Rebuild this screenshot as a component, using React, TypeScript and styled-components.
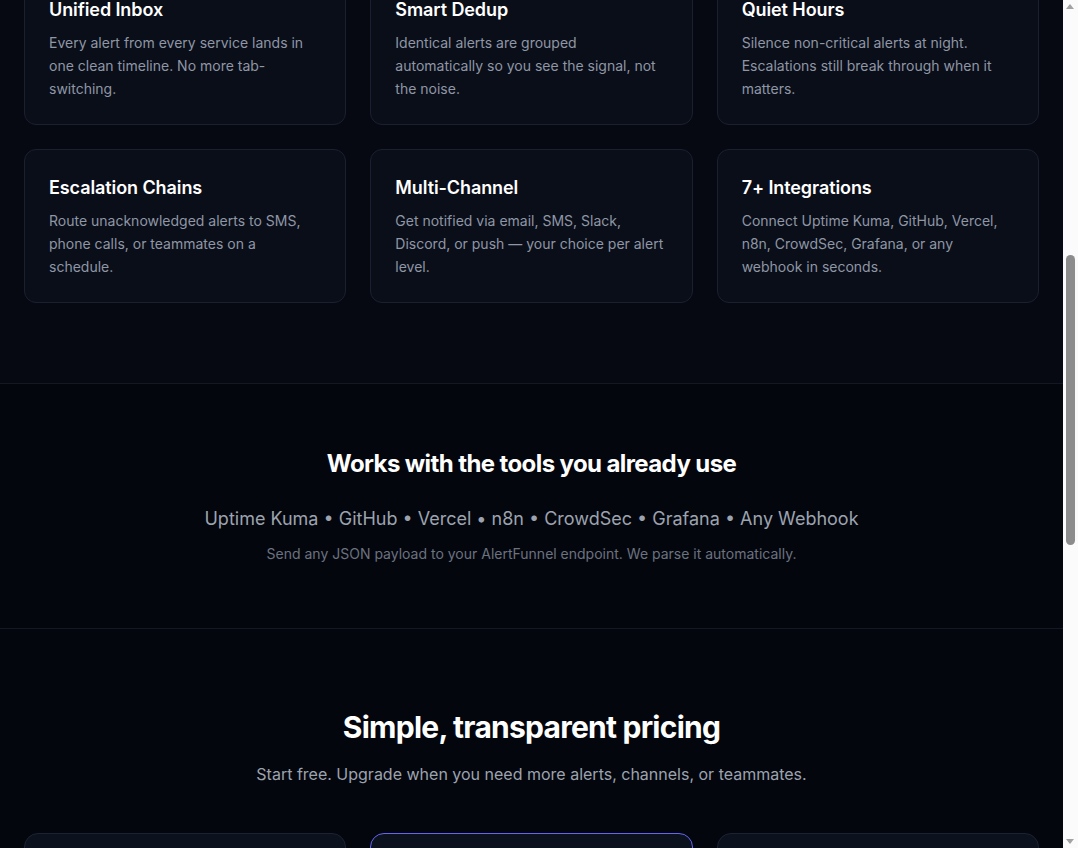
import React, { useLayoutEffect, useRef } from "react";
import styled, { createGlobalStyle } from "styled-components";

const GlobalStyle = createGlobalStyle`
  html { scroll-behavior: auto; }
  body {
    margin: 0;
    background: #04060d;
    color: #f3f4f6;
    font-family: Inter, "Noto Sans", "Liberation Sans", sans-serif;
    -webkit-font-smoothing: antialiased;
  }
  * { box-sizing: border-box; }
`;

const Page = styled.div`
  display: flex;
  flex-direction: column;
  margin-right: 15px;
`;

const ScrollTrack = styled.div`
  position: fixed;
  top: 0;
  right: 0;
  width: 15px;
  height: 100vh;
  background: #fbfbfb;
  z-index: 10;
`;

const ScrollThumb = styled.div`
  position: absolute;
  left: 3px;
  width: 9px;
  border-radius: 5px;
  background: #8c8c8c;
`;

const ScrollArrow = styled.div<{ $down?: boolean }>`
  position: absolute;
  left: 3px;
  width: 0;
  height: 0;
  border-left: 4.5px solid transparent;
  border-right: 4.5px solid transparent;
  ${(p) =>
    p.$down
      ? "bottom: 4px; border-top: 5px solid #a3a3a3;"
      : "top: 4px; border-bottom: 5px solid #a3a3a3;"}
`;

const Nav = styled.header`
  display: flex;
  align-items: center;
  justify-content: space-between;
  height: 64px;
  padding: 0 24px;
  border-bottom: 1px solid #141926;
`;

const Brand = styled.div`
  font-weight: 700;
  font-size: 18px;
  color: #ffffff;
`;

const NavLinks = styled.nav`
  display: flex;
  gap: 24px;
  font-size: 14px;
  color: #9ca3af;
`;

const Hero = styled.section`
  display: flex;
  flex-direction: column;
  align-items: center;
  padding: 96px 24px 80px;
  text-align: center;
  gap: 20px;
`;

const HeroTitle = styled.h1`
  margin: 0;
  font-size: 48px;
  line-height: 1.1;
  font-weight: 800;
  letter-spacing: -0.03em;
`;

const HeroText = styled.p`
  margin: 0;
  font-size: 18px;
  color: #9ca3af;
`;

const Section = styled.section<{ $bg?: string; $pad: string; $border?: boolean }>`
  background: ${(p) => p.$bg || "#04060d"};
  padding: ${(p) => p.$pad};
  border-top: ${(p) => (p.$border ? "1px solid #131825" : "none")};
`;

const Container = styled.div`
  max-width: 1100px;
  margin: 0 auto;
  display: flex;
  flex-direction: column;
`;

const SectionHead = styled.div`
  display: flex;
  flex-direction: column;
  align-items: center;
  text-align: center;
  margin-bottom: 48px;
`;

const Grid = styled.div`
  display: grid;
  grid-template-columns: repeat(3, 1fr);
  gap: 24px;
`;

const Card = styled.div`
  background: #0a0e19;
  border: 1px solid #1b2030;
  border-radius: 12px;
  padding: 24px;
`;

const CardTitle = styled.h3`
  margin: 0 0 8px;
  font-size: 18px;
  line-height: 27px;
  font-weight: 600;
  color: #ffffff;
  letter-spacing: -0.005em;
`;

const CardText = styled.p`
  margin: 0;
  font-size: 14px;
  line-height: 23px;
  color: #8f96a5;
`;

const H2 = styled.h2<{ $size: number; $line: string }>`
  margin: 0;
  font-size: ${(p) => p.$size}px;
  line-height: ${(p) => p.$line};
  font-weight: 700;
  color: #ffffff;
  letter-spacing: -0.025em;
`;

const Center = styled.div`
  display: flex;
  flex-direction: column;
  align-items: center;
  text-align: center;
`;

const ToolList = styled.p`
  margin: 25px 0 0;
  font-size: 18px;
  line-height: 28px;
  color: #9ca3af;
`;

const Note = styled.p`
  margin: 11px 0 0;
  font-size: 14px;
  line-height: 20px;
  color: #6b7280;
`;

const Sub = styled.p<{ $gap: number }>`
  margin: ${(p) => p.$gap}px 0 0;
  font-size: 16px;
  line-height: 24px;
  color: #9ca3af;
`;

const PriceGrid = styled(Grid)`
  margin-top: 47px;
`;

const PriceCard = styled.div<{ $featured?: boolean }>`
  background: #0c111e;
  border: 1px solid ${(p) => (p.$featured ? "#6366f1" : "#1c2232")};
  border-radius: 14px;
  padding: 32px 28px;
  display: flex;
  flex-direction: column;
  gap: 16px;
  min-height: 520px;
`;

const PlanName = styled.div`
  font-size: 16px;
  font-weight: 600;
  color: #e5e7eb;
`;

const Price = styled.div`
  font-size: 40px;
  font-weight: 800;
  color: #ffffff;
`;

const Feature = styled.li`
  font-size: 14px;
  color: #9ca3af;
  line-height: 28px;
`;

const FeatureList = styled.ul`
  margin: 0;
  padding: 0 0 0 18px;
`;

const Footer = styled.footer`
  border-top: 1px solid #131825;
  padding: 40px 24px;
  text-align: center;
  font-size: 13px;
  color: #6b7280;
`;

const features = [
  ["Unified Inbox", "Every alert from every service lands in one clean timeline. No more tab-switching."],
  ["Smart Dedup", "Identical alerts are grouped automatically so you see the signal, not the noise."],
  ["Quiet Hours", "Silence non-critical alerts at night. Escalations still break through when it matters."],
  ["Escalation Chains", "Route unacknowledged alerts to SMS, phone calls, or teammates on a schedule."],
  ["Multi-Channel", "Get notified via email, SMS, Slack, Discord, or push \u2014 your choice per alert level."],
  ["7+ Integrations", "Connect Uptime Kuma, GitHub, Vercel, n8n, CrowdSec, Grafana, or any webhook in seconds."],
];

const plans = [
  { name: "Free", price: "$0", items: ["100 alerts / month", "Email notifications", "3 integrations", "7-day history"] },
  { name: "Pro", price: "$9", featured: true, items: ["5,000 alerts / month", "SMS, Slack, Discord", "Unlimited integrations", "Quiet hours", "90-day history"] },
  { name: "Team", price: "$29", items: ["25,000 alerts / month", "Escalation chains", "5 teammates", "Phone calls", "1-year history"] },
];

export default function App() {
  const gridRef = useRef<HTMLDivElement>(null);

  useLayoutEffect(() => {
    const el = gridRef.current;
    if (!el) return;
    const top = el.getBoundingClientRect().top + window.scrollY;
    window.scrollTo(0, top + 29);
  }, []);

  return (
    <Page>
      <GlobalStyle />
      <ScrollTrack aria-hidden>
        <ScrollArrow />
        <ScrollThumb style={{ top: 255, height: 290 }} />
        <ScrollArrow $down />
      </ScrollTrack>
      <Nav>
        <Brand>AlertFunnel</Brand>
        <NavLinks>
          <span>Features</span>
          <span>Integrations</span>
          <span>Pricing</span>
        </NavLinks>
      </Nav>
      <Hero>
        <HeroTitle>All your alerts. One calm inbox.</HeroTitle>
        <HeroText>AlertFunnel collects, dedupes and routes alerts from every tool you use.</HeroText>
      </Hero>
      <Section $bg="#060912" $pad="80px 24px">
        <Container>
          <SectionHead>
            <H2 $size={30} $line="1.25">Everything you need to stay on top</H2>
            <Sub $gap={14}>Built for developers and small teams who are tired of alert chaos.</Sub>
          </SectionHead>
          <Grid ref={gridRef}>
            {features.map(([t, d]) => (
              <Card key={t}>
                <CardTitle>{t}</CardTitle>
                <CardText>{d}</CardText>
              </Card>
            ))}
          </Grid>
        </Container>
      </Section>
      <Section $pad="64px 24px" $border>
        <Center>
          <H2 $size={24} $line="32px">Works with the tools you already use</H2>
          <ToolList>
            Uptime Kuma &bull; GitHub &bull; Vercel &bull; n8n &bull; CrowdSec &bull; Grafana &bull; Any Webhook
          </ToolList>
          <Note>Send any JSON payload to your AlertFunnel endpoint. We parse it automatically.</Note>
        </Center>
      </Section>
      <Section $pad="80px 24px" $border>
        <Container>
          <Center>
            <H2 $size={30} $line="1.25">Simple, transparent pricing</H2>
            <Sub $gap={15}>Start free. Upgrade when you need more alerts, channels, or teammates.</Sub>
          </Center>
          <PriceGrid>
            {plans.map((p) => (
              <PriceCard key={p.name} $featured={p.featured}>
                <PlanName>{p.name}</PlanName>
                <Price>{p.price}</Price>
                <FeatureList>
                  {p.items.map((i) => (
                    <Feature key={i}>{i}</Feature>
                  ))}
                </FeatureList>
              </PriceCard>
            ))}
          </PriceGrid>
        </Container>
      </Section>
      <Footer>&copy; 2025 AlertFunnel. All rights reserved.</Footer>
    </Page>
  );
}
